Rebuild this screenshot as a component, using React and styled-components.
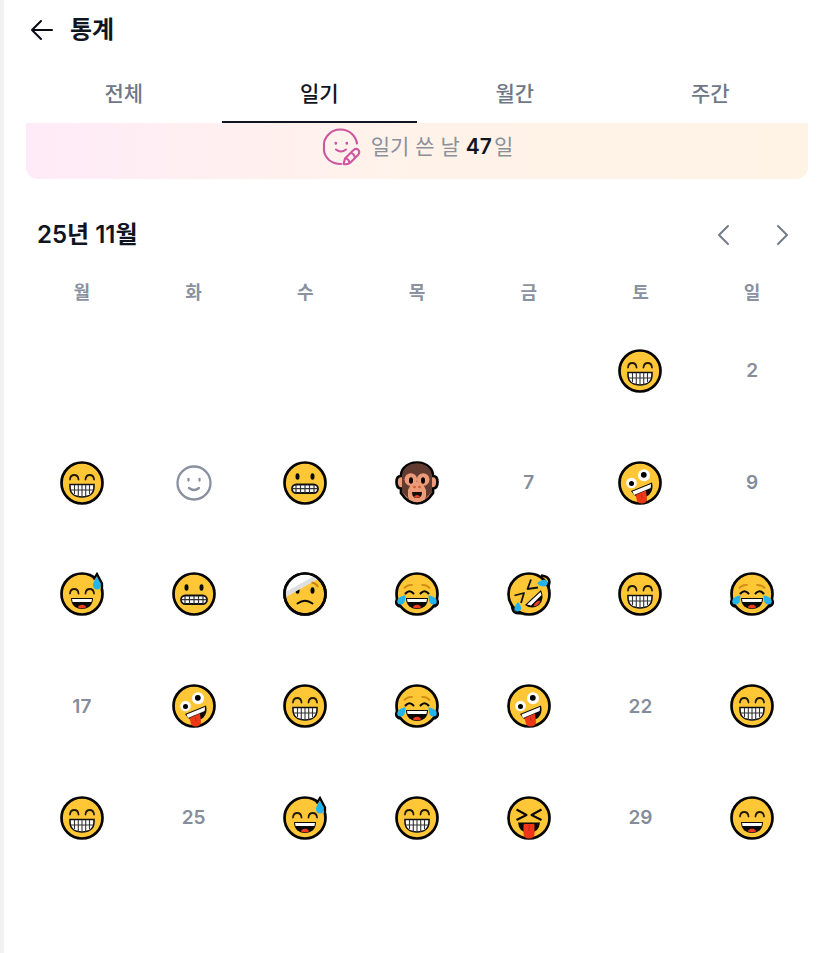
import React, { useState } from 'react';
import styled, { createGlobalStyle } from 'styled-components';

const GlobalStyle = createGlobalStyle`
    * {
        box-sizing: border-box;
    }

    body {
        margin: 0;
        background: #fff;
        color: #111522;
        font-family: Inter, 'Noto Sans CJK KR', sans-serif;
    }

    button {
        padding: 0;
        border: none;
        background: transparent;
        color: inherit;
        font: inherit;
        cursor: pointer;
    }

    svg {
        display: block;
        flex: none;
    }
`;

const Page = styled.main`
    min-height: 100vh;
    padding: 0 19px 0 22px;
    border-left: 4px solid #f2f2f2;
`;

const Header = styled.header`
    display: flex;
    align-items: center;
    gap: 16px;
    height: 60px;
    padding-left: 4px;
`;

const Title = styled.h1`
    margin: 0;
    font-size: 24px;
    line-height: 32px;
    font-weight: 600;
`;

const Tabs = styled.nav`
    display: grid;
    grid-template-columns: repeat(4, 1fr);
    padding-top: 3px;
`;

const Tab = styled.button`
    height: 60px;
    padding-top: 4px;
    border-bottom: 2px solid ${({ $active }) => ($active ? '#111522' : 'transparent')};
    color: ${({ $active }) => ($active ? '#111522' : '#6f7787')};
    font-size: 21px;
    line-height: 28px;
    font-weight: 500;
`;

const Banner = styled.section`
    display: flex;
    align-items: center;
    justify-content: center;
    gap: 10px;
    height: 56px;
    padding-bottom: 8px;
    border-radius: 0 0 12px 12px;
    background: linear-gradient(90deg, #ffebf8, #fff3e9 50%, #fff3e6);
`;

const BannerText = styled.p`
    margin: 0;
    color: #8b8f99;
    font-size: 21px;
    line-height: 32px;
`;

const Count = styled.strong`
    margin-right: 2px;
    color: #111522;
    font-weight: 600;
`;

const MonthBar = styled.div`
    display: flex;
    align-items: center;
    justify-content: space-between;
    margin-top: 38px;
    padding: 0 10px 0 11px;
`;

const Month = styled.h2`
    margin: 0;
    font-size: 24px;
    line-height: 36px;
    font-weight: 600;
`;

const MonthButtons = styled.div`
    display: flex;
    gap: 26px;
    color: #747c8c;
`;

const Week = styled.div`
    display: grid;
    grid-template-columns: repeat(7, 1fr);
    justify-items: center;
    margin: 26px 0 8px;
    color: #8a91a0;
    font-size: 18px;
    line-height: 28px;
    font-weight: 600;
`;

const Days = styled.div`
    display: grid;
    grid-template-columns: repeat(7, 1fr);
`;

const Day = styled.button`
    display: flex;
    align-items: center;
    justify-content: center;
    grid-column-start: ${({ $column }) => $column || 'auto'};
    aspect-ratio: 1;
    color: #858c9b;
    font-size: 19px;
    font-weight: 600;
`;

const BackIcon = () => (
    <svg width="24" height="24" viewBox="0 0 24 24" fill="none" stroke="#080b12" strokeWidth="2" strokeLinecap="round" strokeLinejoin="round">
        <path d="M22 12H2M11 3L2 12L11 21" />
    </svg>
);

const Chevron = ({ flip }) => (
    <svg width="32" height="32" viewBox="0 0 32 32" fill="none" stroke="currentColor" strokeWidth="2" strokeLinecap="round" strokeLinejoin="round">
        <path d={flip ? 'M12 7L21 16L12 25' : 'M20 7L11 16L20 25'} />
    </svg>
);

const DiaryIcon = () => (
    <svg width="40" height="40" viewBox="0 0 40 40" fill="none" stroke="#cc569f" strokeWidth="2.1" strokeLinecap="round" strokeLinejoin="round">
        <path d="M36 16.500C35.500 13 34 10 31 7C28 4 24 2.500 19 2.500C15 2.500 11 4 8 7C5 10 3 13 3 17V23C3 26 5 30 8 33C11 35.500 15 37 20 37" />
        <path d="M15 22.500Q20 26.500 25 22.500" />
        <path d="M14.800 16V16.500M25.800 16V16.500" strokeWidth="2.600" />
        <path d="M22.500 37L24 31.500L32 23.500Q34.500 21 37 22.500Q39.500 25 37 28L29.500 35.500Q27 38 22.500 37ZM24.500 31.500Q28 32 28.500 36M31 26.500Q33 27 33.500 29.500" />
    </svg>
);

const PlainSmile = () => (
    <svg width="36" height="36" viewBox="0 0 36 36" fill="none" stroke="#8990a0" strokeWidth="2.3" strokeLinecap="round">
        <circle cx="18" cy="18" r="16.500" />
        <path d="M13 23Q18 27 23 23" />
        <path d="M12.500 14V15.500M23.500 14V15.500" strokeWidth="2.300" />
    </svg>
);

const Face = () => <circle cx="22" cy="22" r="20.500" fill="#ffc636" stroke="#050505" strokeWidth="2.700" />;

const HappyEyes = ({ y = 0 }) => (
    <g transform={`translate(0 ${y})`}>
        <path d="M10 18.500C10.500 12.500 18 12.500 18.500 18.500M25.500 18.500C26 12.500 33.500 12.500 34 18.500" fill="none" stroke="#231a0a" strokeWidth="1.800" strokeLinecap="round" />
    </g>
);

const LaughMouth = () => (
    <g>
        <path d="M11 26H33C33 33 28.500 37 22 37S11 33 11 26Z" fill="#0b0808" />
        <path d="M12 27H32L31.400 30H12.600Z" fill="#fff" />
        <path d="M18 35.500C18 31.700 26 31.700 26 35.500C24 36.500 20 36.500 18 35.500Z" fill="#ef3b20" />
    </g>
);

const faces = {
    grin: (
        <g>
            <Face />
            <HappyEyes />
            <path d="M10 23.500H34V26C34 32.500 29 36 22 36S10 32.500 10 26Z" fill="#fff" stroke="#111" strokeWidth="1.600" />
            <path d="M11 29H33M14.500 24V33M18.300 24V36M22 24V36M25.700 24V36M29.500 24V33" stroke="#333" strokeWidth="1.100" />
        </g>
    ),
    grimace: (
        <g>
            <Face />
            <ellipse cx="14.500" cy="15.500" rx="2" ry="3.200" fill="#090909" />
            <ellipse cx="29.500" cy="15.500" rx="2" ry="3.200" fill="#090909" />
            <rect x="9" y="23.500" width="26" height="8.500" rx="4.250" fill="#fff" stroke="#111" strokeWidth="1.800" />
            <path d="M9 27.700H35M13 24V32M17.500 24V32M22 24V32M26.500 24V32M31 24V32" stroke="#333" strokeWidth="1.200" />
        </g>
    ),
    monkey: (
        <g>
            <path d="M22 1.500Q30 1.500 35 7Q38 10.500 38 15Q42.500 15 42.500 21Q42.500 27.500 38 27.500V32Q31 42.500 22 42.500T6 32V27.500Q1.500 27.500 1.500 21Q1.500 15 6 15Q6 10.500 9 7Q14 1.500 22 1.500Z" fill="#ec9b78" stroke="#050505" strokeWidth="2.700" />
            <path d="M22 2.500Q30 2.500 34 7.500Q37 11 37 16V31L30 38V28H14V38L7 31V16Q7 11 10 7.500Q14 2.500 22 2.500Z" fill="#623b30" />
            <circle cx="15.800" cy="18.500" r="6.300" fill="#ec9b78" />
            <circle cx="28.200" cy="18.500" r="6.300" fill="#ec9b78" />
            <path d="M17 21H27L31 29V36Q28 41 22 41T13 36V29Z" fill="#ec9b78" />
            <ellipse cx="16" cy="19.500" rx="2" ry="3.200" fill="#090505" />
            <ellipse cx="28" cy="19.500" rx="2" ry="3.200" fill="#090505" />
            <circle cx="19.500" cy="26" r="1.300" fill="#d3572b" />
            <circle cx="24.500" cy="26" r="1.300" fill="#d3572b" />
            <path d="M17 31H27Q27 37 22 37T17 31Z" fill="#160b07" />
            <path d="M19 35.500Q22 32.500 25 35.500Q22 38 19 35.500Z" fill="#ed482b" />
        </g>
    ),
    zany: (
        <g>
            <Face />
            <circle cx="13.500" cy="22" r="5.300" fill="#fff" />
            <circle cx="13.500" cy="22.500" r="2.500" />
            <circle cx="26" cy="14.200" r="6" fill="#fff" />
            <circle cx="25.800" cy="13.800" r="2.900" />
            <path d="M13 30L34 21.500Q36 29 31 34Q23 40 16 34Z" fill="#0b0909" />
            <path d="M14.500 30.500L33 23L32.700 27L16 34Z" fill="#fff" />
            <path d="M17.500 34L28 29.500L29 38Q29 42 24 42.500Q19 42.500 18.500 38Z" fill="#ed3818" />
            <path d="M23.500 33L24 37" stroke="#b92d19" strokeWidth="1" />
        </g>
    ),
    sweat: (
        <g>
            <Face />
            <HappyEyes y={3} />
            <LaughMouth />
            <path d="M37 1.500L33 8.500V14Q35 18 37 18Q41 18 42 14V11Z" fill="#ffc636" />
            <path d="M37 4.500Q41 10 41 13.500Q40.500 17.500 37 17.500T33 13.500Q33 10 37 4.500Z" fill="#23b4ee" />
            <path d="M33.500 7.500L37 2L42 11.500V16" fill="none" stroke="#050505" strokeWidth="2.300" />
        </g>
    ),
    bandage: (
        <g>
            <Face />
            <ellipse cx="14.500" cy="18.500" rx="2" ry="3.200" />
            <path d="M2.500 23V18Q5 5 19 2.300Q29 1.500 35 7Z" fill="#fff" />
            <path d="M2.700 20L31 4L35 7L3 25Z" fill="#dfdfe2" />
            <circle cx="22" cy="22" r="20.500" fill="none" stroke="#050505" strokeWidth="2.700" />
            <ellipse cx="29.500" cy="18.500" rx="2" ry="3.300" />
            <path d="M28.500 10.500Q33 11 35 15" fill="none" stroke="#c98512" strokeWidth="2" />
            <path d="M14.500 31.500Q22 26 29.500 31.500" fill="none" stroke="#090909" strokeWidth="2" strokeLinecap="round" />
        </g>
    ),
    joy: (
        <g>
            <path d="M4 24Q-1.500 31 3.500 34Q5 35 8 33M40 24Q45.500 31 40.500 34Q39 35 36 33" fill="#23b4ee" stroke="#050505" strokeWidth="2.500" />
            <Face />
            <path d="M9 16.500Q12 12.500 17.500 13M35 16.500Q32 12.500 26.500 13" fill="none" stroke="#d48d13" strokeWidth="2" />
            <path d="M10.500 21.500Q14.500 17 18.500 21.500M25.500 21.500Q29.500 17 33.500 21.500" fill="none" stroke="#090909" strokeWidth="2" strokeLinecap="round" />
            <LaughMouth />
            <path d="M10.500 23.500C5 24 2 27 2.200 30Q3 33 6.500 32.500Q10.500 32 10.500 23.500ZM33.500 23.500C39 24 42 27 41.800 30Q41 33 37.500 32.500Q33.500 32 33.500 23.500Z" fill="#23b4ee" />
        </g>
    ),
    rofl: (
        <g>
            <path d="M34 3.500Q42 4 42.500 10L41 17M4 27L5.500 37Q7 42.500 15 41" fill="#ffc636" stroke="#050505" strokeWidth="2.500" />
            <Face />
            <path d="M24 7.500L20.500 17L31 15.500M7.500 23.500L17 21L14 31" fill="none" stroke="#111" strokeWidth="1.800" strokeLinejoin="round" />
            <path d="M18 33L34 18Q38 27 32 33Q25 38 18 33Z" fill="#080808" />
            <path d="M20 32.500L33.500 20L34.500 23L24 33.500Z" fill="#fff" />
            <path d="M26.500 34.500Q28 29 33.500 28.500Q32 34 26.500 34.500Z" fill="#ed3b20" />
            <path d="M30 11Q36 6 40 8.500Q42 13 37.500 14.500Q33 15 30 11ZM11 30Q7 34 7.500 38Q11 41 14 37.500Q15 34 11 30Z" fill="#23b4ee" />
        </g>
    ),
    tongue: (
        <g>
            <Face />
            <path d="M9.500 13.500L19.500 19L9.500 24M34.500 13.500L24.500 19L34.500 24" fill="none" stroke="#090909" strokeWidth="2" strokeLinejoin="round" />
            <path d="M11 26.500H33Q32 37 22 37T11 26.500Z" fill="#0b0808" />
            <path d="M16.500 29Q17 27 19 28H25Q27 27 27.500 29V38Q27 42.500 22 42.500T16.500 38Z" fill="#ed3818" />
            <path d="M22 29V35" stroke="#b92d19" strokeWidth="1" />
        </g>
    ),
    smile: (
        <g>
            <Face />
            <HappyEyes y={2} />
            <LaughMouth />
        </g>
    ),
};

const Emoji = ({ name }) => (
    <svg width="44" height="44" viewBox="0 0 44 44">
        {faces[name]}
    </svg>
);

const tabs = ['전체', '일기', '월간', '주간'];
const weekdays = ['월', '화', '수', '목', '금', '토', '일'];

// null is a day without a diary, 'plain' is a diary without a mood
const moods = [
    'grin', null,
    'grin', 'plain', 'grimace', 'monkey', null, 'zany', null,
    'sweat', 'grimace', 'bandage', 'joy', 'rofl', 'grin', 'joy',
    null, 'zany', 'grin', 'joy', 'zany', null, 'grin',
    'grin', null, 'sweat', 'grin', 'tongue', null, 'smile',
];

const App = () => {
    const [active, setActive] = useState('일기');

    return <>
        <GlobalStyle />
        <Page>
            <Header>
                <button type="button" aria-label="뒤로"><BackIcon /></button>
                <Title>통계</Title>
            </Header>
            <Tabs>
                {tabs.map((tab) => (
                    <Tab key={tab} type="button" $active={tab === active} onClick={() => setActive(tab)}>{tab}</Tab>
                ))}
            </Tabs>
            <Banner>
                <DiaryIcon />
                <BannerText>일기 쓴 날 <Count>47</Count>일</BannerText>
            </Banner>
            <MonthBar>
                <Month>25년 11월</Month>
                <MonthButtons>
                    <button type="button" aria-label="이전 달"><Chevron /></button>
                    <button type="button" aria-label="다음 달"><Chevron flip /></button>
                </MonthButtons>
            </MonthBar>
            <Week>
                {weekdays.map((day) => <span key={day}>{day}</span>)}
            </Week>
            <Days>
                {moods.map((mood, i) => (
                    <Day key={i} type="button" aria-label={`${i + 1}일`} $column={i === 0 ? 6 : undefined}>
                        {mood === null && i + 1}
                        {mood === 'plain' && <PlainSmile />}
                        {mood && mood !== 'plain' && <Emoji name={mood} />}
                    </Day>
                ))}
            </Days>
        </Page>
    </>
}

export default App
